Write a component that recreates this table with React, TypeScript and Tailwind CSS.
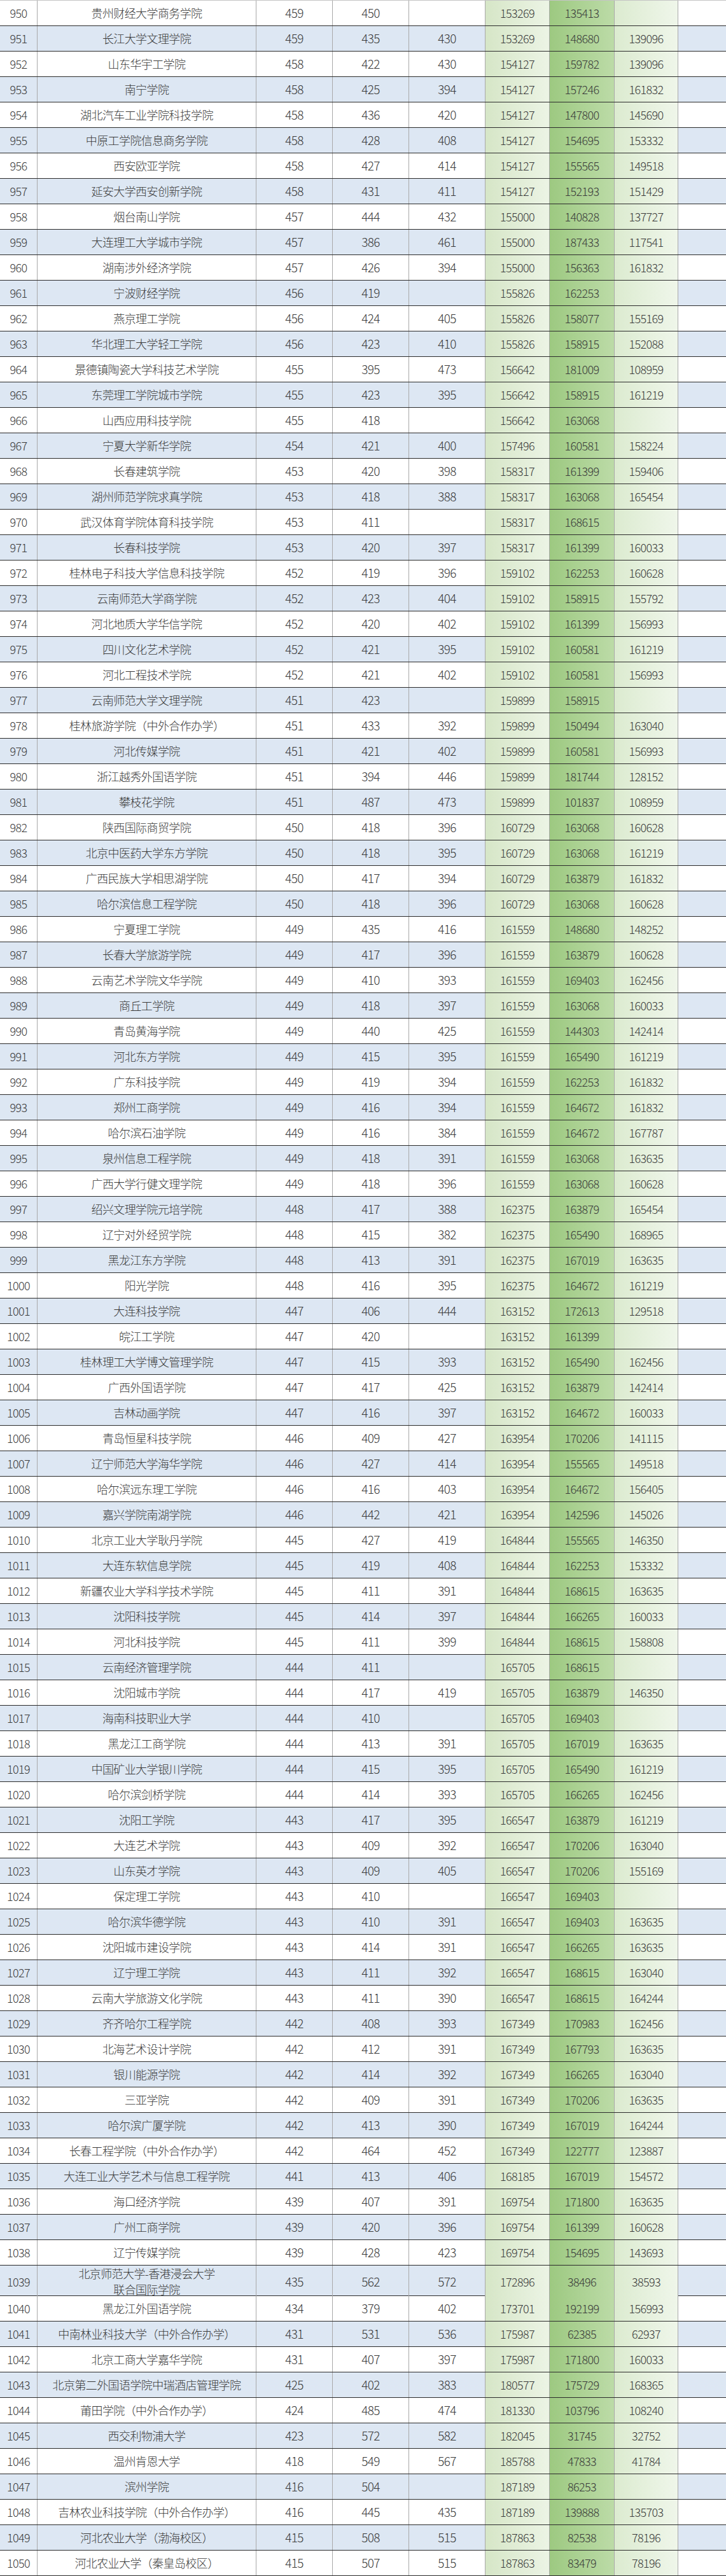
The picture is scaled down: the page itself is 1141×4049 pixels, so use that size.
const raw = `950|贵州财经大学商务学院|459|450||153269|135413|
951|长江大学文理学院|459|435|430|153269|148680|139096
952|山东华宇工学院|458|422|430|154127|159782|139096
953|南宁学院|458|425|394|154127|157246|161832
954|湖北汽车工业学院科技学院|458|436|420|154127|147800|145690
955|中原工学院信息商务学院|458|428|408|154127|154695|153332
956|西安欧亚学院|458|427|414|154127|155565|149518
957|延安大学西安创新学院|458|431|411|154127|152193|151429
958|烟台南山学院|457|444|432|155000|140828|137727
959|大连理工大学城市学院|457|386|461|155000|187433|117541
960|湖南涉外经济学院|457|426|394|155000|156363|161832
961|宁波财经学院|456|419||155826|162253|
962|燕京理工学院|456|424|405|155826|158077|155169
963|华北理工大学轻工学院|456|423|410|155826|158915|152088
964|景德镇陶瓷大学科技艺术学院|455|395|473|156642|181009|108959
965|东莞理工学院城市学院|455|423|395|156642|158915|161219
966|山西应用科技学院|455|418||156642|163068|
967|宁夏大学新华学院|454|421|400|157496|160581|158224
968|长春建筑学院|453|420|398|158317|161399|159406
969|湖州师范学院求真学院|453|418|388|158317|163068|165454
970|武汉体育学院体育科技学院|453|411||158317|168615|
971|长春科技学院|453|420|397|158317|161399|160033
972|桂林电子科技大学信息科技学院|452|419|396|159102|162253|160628
973|云南师范大学商学院|452|423|404|159102|158915|155792
974|河北地质大学华信学院|452|420|402|159102|161399|156993
975|四川文化艺术学院|452|421|395|159102|160581|161219
976|河北工程技术学院|452|421|402|159102|160581|156993
977|云南师范大学文理学院|451|423||159899|158915|
978|桂林旅游学院（中外合作办学）|451|433|392|159899|150494|163040
979|河北传媒学院|451|421|402|159899|160581|156993
980|浙江越秀外国语学院|451|394|446|159899|181744|128152
981|攀枝花学院|451|487|473|159899|101837|108959
982|陕西国际商贸学院|450|418|396|160729|163068|160628
983|北京中医药大学东方学院|450|418|395|160729|163068|161219
984|广西民族大学相思湖学院|450|417|394|160729|163879|161832
985|哈尔滨信息工程学院|450|418|396|160729|163068|160628
986|宁夏理工学院|449|435|416|161559|148680|148252
987|长春大学旅游学院|449|417|396|161559|163879|160628
988|云南艺术学院文华学院|449|410|393|161559|169403|162456
989|商丘工学院|449|418|397|161559|163068|160033
990|青岛黄海学院|449|440|425|161559|144303|142414
991|河北东方学院|449|415|395|161559|165490|161219
992|广东科技学院|449|419|394|161559|162253|161832
993|郑州工商学院|449|416|394|161559|164672|161832
994|哈尔滨石油学院|449|416|384|161559|164672|167787
995|泉州信息工程学院|449|418|391|161559|163068|163635
996|广西大学行健文理学院|449|418|396|161559|163068|160628
997|绍兴文理学院元培学院|448|417|388|162375|163879|165454
998|辽宁对外经贸学院|448|415|382|162375|165490|168965
999|黑龙江东方学院|448|413|391|162375|167019|163635
1000|阳光学院|448|416|395|162375|164672|161219
1001|大连科技学院|447|406|444|163152|172613|129518
1002|皖江工学院|447|420||163152|161399|
1003|桂林理工大学博文管理学院|447|415|393|163152|165490|162456
1004|广西外国语学院|447|417|425|163152|163879|142414
1005|吉林动画学院|447|416|397|163152|164672|160033
1006|青岛恒星科技学院|446|409|427|163954|170206|141115
1007|辽宁师范大学海华学院|446|427|414|163954|155565|149518
1008|哈尔滨远东理工学院|446|416|403|163954|164672|156405
1009|嘉兴学院南湖学院|446|442|421|163954|142596|145026
1010|北京工业大学耿丹学院|445|427|419|164844|155565|146350
1011|大连东软信息学院|445|419|408|164844|162253|153332
1012|新疆农业大学科学技术学院|445|411|391|164844|168615|163635
1013|沈阳科技学院|445|414|397|164844|166265|160033
1014|河北科技学院|445|411|399|164844|168615|158808
1015|云南经济管理学院|444|411||165705|168615|
1016|沈阳城市学院|444|417|419|165705|163879|146350
1017|海南科技职业大学|444|410||165705|169403|
1018|黑龙江工商学院|444|413|391|165705|167019|163635
1019|中国矿业大学银川学院|444|415|395|165705|165490|161219
1020|哈尔滨剑桥学院|444|414|393|165705|166265|162456
1021|沈阳工学院|443|417|395|166547|163879|161219
1022|大连艺术学院|443|409|392|166547|170206|163040
1023|山东英才学院|443|409|405|166547|170206|155169
1024|保定理工学院|443|410||166547|169403|
1025|哈尔滨华德学院|443|410|391|166547|169403|163635
1026|沈阳城市建设学院|443|414|391|166547|166265|163635
1027|辽宁理工学院|443|411|392|166547|168615|163040
1028|云南大学旅游文化学院|443|411|390|166547|168615|164244
1029|齐齐哈尔工程学院|442|408|393|167349|170983|162456
1030|北海艺术设计学院|442|412|391|167349|167793|163635
1031|银川能源学院|442|414|392|167349|166265|163040
1032|三亚学院|442|409|391|167349|170206|163635
1033|哈尔滨广厦学院|442|413|390|167349|167019|164244
1034|长春工程学院（中外合作办学）|442|464|452|167349|122777|123887
1035|大连工业大学艺术与信息工程学院|441|413|406|168185|167019|154572
1036|海口经济学院|439|407|391|169754|171800|163635
1037|广州工商学院|439|420|396|169754|161399|160628
1038|辽宁传媒学院|439|428|423|169754|154695|143693
1039|北京师范大学-香港浸会大学/联合国际学院|435|562|572|172896|38496|38593
1040|黑龙江外国语学院|434|379|402|173701|192199|156993
1041|中南林业科技大学（中外合作办学）|431|531|536|175987|62385|62937
1042|北京工商大学嘉华学院|431|407|397|175987|171800|160033
1043|北京第二外国语学院中瑞酒店管理学院|425|402|383|180577|175729|168365
1044|莆田学院（中外合作办学）|424|485|474|181330|103796|108240
1045|西交利物浦大学|423|572|582|182045|31745|32752
1046|温州肯恩大学|418|549|567|185788|47833|41784
1047|滨州学院|416|504||187189|86253|
1048|吉林农业科技学院（中外合作办学）|416|445|435|187189|139888|135703
1049|河北农业大学（渤海校区）|415|508|515|187863|82538|78196
1050|河北农业大学（秦皇岛校区）|415|507|515|187863|83479|78196`;

const rows = raw.split('\n').map((line) => line.split('|'));

function Row({ cells }: { cells: string[] }) {
  const [rank, name, s1, s2, s3, r1, r2, r3] = cells;
  const odd = Number(rank) % 2 === 1;
  const tall = name.includes('/');
  const rowBg = odd ? 'bg-[#dde7f3]' : 'bg-white';
  const cell = 'flex items-center justify-center border-r border-[#a9a9a9]';

  return (
    <div
      className={`grid grid-cols-[59px_344px_120px_120px_120px_101px_102px_100px_1fr] border-b border-[#2b2b2b] ${
        tall ? 'h-[48px]' : 'h-10'
      } ${rowBg}`}
    >
      <div className={`${cell} text-[18px]`}>{rank}</div>
      <div className={`${cell} text-[18px] text-center leading-[25px]`}>
        {tall ? (
          <div className="flex flex-col">
            {name.split('/').map((part) => (
              <span key={part}>{part}</span>
            ))}
          </div>
        ) : (
          name
        )}
      </div>
      <div className={`${cell} text-[19px]`}>{s1}</div>
      <div className={`${cell} text-[19px]`}>{s2}</div>
      <div className={`${cell} text-[19px]`}>{s3}</div>
      <div className={`${cell} text-[18px] bg-gradient-to-r from-[#d6e6c7] to-[#ecf4e5]`}>{r1}</div>
      <div className={`${cell} text-[18px] bg-gradient-to-r from-[#9dc981] to-[#bcdba7]`}>{r2}</div>
      <div className={`${cell} text-[18px] bg-gradient-to-r from-[#dcebd0] to-[#eff6ea]`}>{r3}</div>
      <div />
    </div>
  );
}

export default function App() {
  return (
    <div
      className="w-[1141px] bg-white text-[#3a3a3a] font-light tracking-[-0.6px] border-t border-[#c4c4c4]"
      style={{ fontFamily: '"Noto Sans CJK SC", "Noto Sans", sans-serif' }}
    >
      {rows.map((cells) => (
        <Row key={cells[0]} cells={cells} />
      ))}
    </div>
  );
}
